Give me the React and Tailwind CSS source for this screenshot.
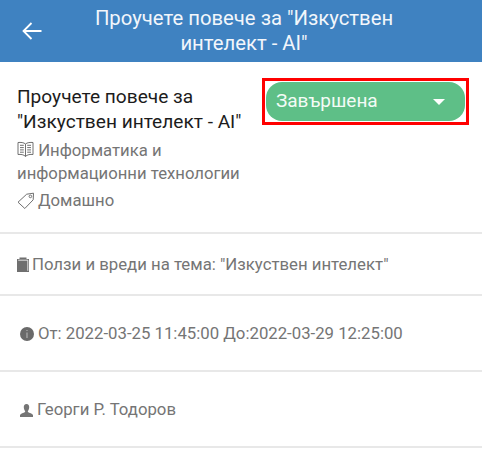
import React from "react";

function BackArrow() {
  return (
    <svg width="20" height="20" viewBox="0 0 20 20" fill="none" stroke="#ffffff" strokeWidth="1.8">
      <path d="M19.5 10H1.5M9.5 2L1.5 10L9.5 18" />
    </svg>
  );
}

function BookIcon() {
  return (
    <svg width="17" height="17" viewBox="0 0 17 17" fill="none" stroke="#707070" strokeWidth="1" className="shrink-0">
      <path d="M8.5 3C7 1.5 3.5 1.2 1 1.5V13.5C3.5 13.2 7 13.5 8.5 15.5C10 13.5 13.5 13.2 16 13.5V1.5C13.5 1.2 10 1.5 8.5 3ZM8.5 3V15.5" />
      <path d="M3 4.3H6.8M3 6.6H6.8M3 8.9H6.8M3 11.2H6.8M10.2 4.3H14M10.2 6.6H14M10.2 8.9H14M10.2 11.2H14" />
    </svg>
  );
}

function TagIcon() {
  return (
    <svg width="18" height="18" viewBox="0 0 18 18" fill="none" stroke="#707070" strokeWidth="1" className="shrink-0">
      <path d="M1 10.2L9.7 2.2L16.5 1.2L16.2 7.8L7.8 16.5Z" />
      <circle cx="13.4" cy="4.4" r="1.3" />
    </svg>
  );
}

function ClipboardIcon() {
  return (
    <svg width="12" height="15" viewBox="0 0 12 15" className="shrink-0">
      <path fill="#6f6f6f" d="M0 2H2.5V0.5H9.5V2H12V15H0Z" />
      <path fill="none" stroke="#ffffff" strokeWidth="0.8" d="M1.2 3.2H10.8V13.8" />
    </svg>
  );
}

function InfoIcon() {
  return (
    <svg width="14" height="14" viewBox="0 0 14 14" className="shrink-0">
      <circle cx="7" cy="7" r="7" fill="#6a6a6a" />
      <path fill="#d0d0d0" d="M6.6 3H7.4V4H6.6ZM6.6 5.5H7.4V11H6.6Z" />
    </svg>
  );
}

function UserIcon() {
  return (
    <svg width="13" height="13" viewBox="0 0 13 13" className="shrink-0">
      <path fill="#757575" d="M6.5 0C8.4 0 9.3 1.4 9.2 3.4C9.1 5 8.5 6.2 7.9 6.9V8.1C9.5 9.2 12.2 9.3 13 11V13H0V11C0.8 9.3 3.5 9.2 5.1 8.1V6.9C4.5 6.2 3.9 5 3.8 3.4C3.7 1.4 4.6 0 6.5 0Z" />
    </svg>
  );
}

function InlineBook() {
  return (
    <span className="inline-block align-[-2px]">
      <BookIcon />
    </span>
  );
}

function InfoRow({ className, children }) {
  return (
    <div className={"flex items-center border-b-2 border-[#e8e8e8] text-[16.75px] text-[#757575] " + className}>
      {children}
    </div>
  );
}

export default function App() {
  return (
    <div className="w-[482px] h-[450px] overflow-hidden bg-white font-['Roboto',sans-serif]">
      <header className="h-[62px] bg-[#3f82c1] flex items-center text-white">
        <div className="w-[65px] shrink-0 pl-[22px]">
          <BackArrow />
        </div>
        <h1 className="w-[358px] text-center text-[20.3px] leading-[25px] text-[#f2f6fb]">
          Проучете повече за "Изкуствен интелект - AI"
        </h1>
      </header>

      <section className="h-[172px] border-b-2 border-[#e8e8e8] flex items-start pl-[17px] pr-[13px]">
        <div className="w-[245px] pt-[22px]">
          <p className="text-[19.1px] leading-[25px] text-[#1c1c1c]">
            Проучете повече за "Изкуствен интелект - AI"
          </p>
          <p className="mt-[5px] text-[16.7px] leading-[23px] text-[#757575]">
            <InlineBook /> Информатика и информационни технологии
          </p>
          <div className="mt-[4px] flex items-center gap-[3px] text-[16.7px] leading-[23px] text-[#757575]">
            <TagIcon />
            <span>Домашно</span>
          </div>
        </div>
        <div className="ml-auto mt-[16px] border-[3px] border-[#ff0000] w-[207px] h-[47px] p-[1px]">
          <div className="h-full rounded-[16px] bg-[#5ebf87] flex items-center justify-between pl-[10px] pr-[20px] text-[19px] text-[#f3fbf6]">
            <span>Завършена</span>
            <span className="w-0 h-0 border-x-[6px] border-x-transparent border-t-[6px] border-t-white" />
          </div>
        </div>
      </section>

      <InfoRow className="h-[62px] pl-[17px] gap-[3px] pt-[1px]">
        <ClipboardIcon />
        <span>Ползи и вреди на тема: "Изкуствен интелект"</span>
      </InfoRow>
      <InfoRow className="h-[76px] pl-[20px] gap-[4px] pt-[1px]">
        <InfoIcon />
        <span>От: 2022-03-25 11:45:00 До:2022-03-29 12:25:00</span>
      </InfoRow>
      <InfoRow className="h-[76px] pl-[20px] gap-[4px] pt-[2px]">
        <UserIcon />
        <span>Георги Р. Тодоров</span>
      </InfoRow>
    </div>
  );
}
